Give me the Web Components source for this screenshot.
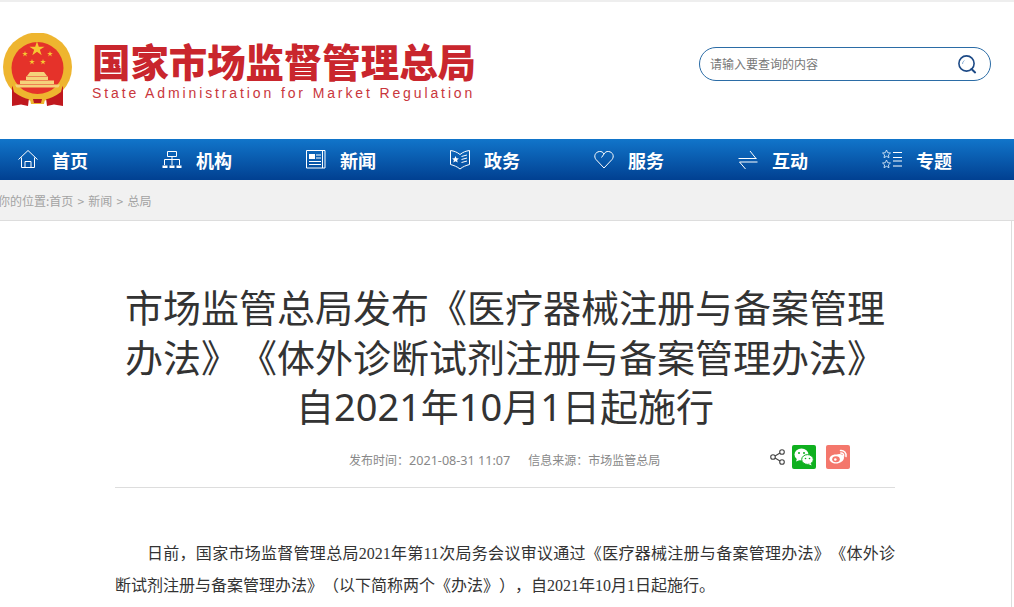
<!DOCTYPE html>
<html lang="zh-CN">
<head>
<meta charset="utf-8">
<title>国家市场监督管理总局</title>
<style>
  html, body { margin: 0; padding: 0; background: #fff; overflow: hidden; }
  body { font-family: "Noto Sans CJK SC", "Noto Sans", sans-serif; text-spacing-trim: space-all; }
</style>
</head>
<body>
<site-page>
  <site-header slot="header"></site-header>
  <nav-bar slot="nav">
    <nav-item label="首页" icon="home"></nav-item>
    <nav-item label="机构" icon="org"></nav-item>
    <nav-item label="新闻" icon="news"></nav-item>
    <nav-item label="政务" icon="gov"></nav-item>
    <nav-item label="服务" icon="heart"></nav-item>
    <nav-item label="互动" icon="swap"></nav-item>
    <nav-item label="专题" icon="topic"></nav-item>
  </nav-bar>
  <bread-crumb slot="crumb">你的位置:首页 &gt; 新闻 &gt; 总局</bread-crumb>
  <article-view slot="main">
    <span slot="title">市场监管总局发布《医疗器械注册与备案管理办法》《体外诊断试剂注册与备案管理办法》自2021年10月1日起施行</span>
    <article-meta slot="meta" date="2021-08-31 11:07" source="市场监管总局"></article-meta>
    日前，国家市场监督管理总局2021年第11次局务会议审议通过《医疗器械注册与备案管理办法》《体外诊断试剂注册与备案管理办法》（以下简称两个《办法》），自2021年10月1日起施行。
  </article-view>
</site-page>

<script>
class SitePage extends HTMLElement {
  constructor() {
    super()
    this.attachShadow({ mode: 'open' })
    this.shadowRoot.innerHTML = `
      <style>
        :host { display: block; border-top: 2px solid #eee; }
      </style>
      <slot name="header"></slot>
      <slot name="nav"></slot>
      <slot name="crumb"></slot>
      <slot name="main"></slot>
    `
  }
}

class SearchBox extends HTMLElement {
  constructor() {
    super()
    this.attachShadow({ mode: 'open' })
    this.shadowRoot.innerHTML = `
      <style>
        :host { display: flex; align-items: center; justify-content: space-between; box-sizing: border-box;
          width: 292px; height: 34px; margin-top: -14px; padding: 0 13px 0 10px; border: 1px solid #2b6ca6; border-radius: 17px;
          font-size: 12px; color: #777; background: #fff; }
        svg { display: block; }
      </style>
      <span>请输入要查询的内容</span>
      <svg width="20" height="20" viewBox="0 0 20 20" fill="none">
        <circle cx="9.5" cy="9.5" r="7.6" stroke="#1d4a86" stroke-width="1.6"/>
        <path d="M14.5 15l3.6 3.4" stroke="#1d4a86" stroke-width="2" stroke-linecap="round"/>
        <path d="M5.5 10a4 4 0 0 1 2-3.6" stroke="#8fb2d8" stroke-width="1"/>
      </svg>
    `
  }
}

const STAR = 'M0-3L.7-.9H2.900L1.100.3 1.800 2.400 0 1.100-1.800 2.400-1.100.3-2.900-.9H-.7Z'

class SiteHeader extends HTMLElement {
  constructor() {
    super()
    this.attachShadow({ mode: 'open' })
    this.shadowRoot.innerHTML = `
      <style>
        :host { display: flex; align-items: center; justify-content: space-between; box-sizing: border-box;
          height: 137px; padding: 0 23px 0 3px; }
        .brand { display: flex; align-items: center; gap: 19px; margin-top: -1px; }
        .logo { display: block; }
        .cn { font-size: 38.4px; line-height: 42px; font-weight: 900; color: #c9262d; white-space: nowrap; }
        .en { font-family: "Liberation Sans", sans-serif; font-size: 14px; line-height: 18px; letter-spacing: 2.88px; color: #c9363c; white-space: nowrap; margin-top: 3px; }
      </style>
      <div class="brand">
        <svg class="logo" width="70" height="74" viewBox="0 0 70 74">
          <circle cx="34.500" cy="34" r="34.500" fill="#eeb52f"/>
          <circle cx="34.500" cy="35" r="26" fill="#e5322a"/>
          <path d="${STAR}" transform="translate(34 16) scale(2.600)" fill="#f6c632"/>
          <path d="${STAR}" transform="translate(22 21)" fill="#f6c632"/>
          <path d="${STAR}" transform="translate(47 21)" fill="#f6c632"/>
          <path d="${STAR}" transform="translate(29 29)" fill="#f6c632"/>
          <path d="${STAR}" transform="translate(40 29)" fill="#f6c632"/>
          <path d="M27 39h14l3 4H24zM23 43.500h22V47H23zM17 47.500h34V51H17zM12 51.500h45l-1.500 3H13.500z" fill="#f5d27a"/>
          <path d="M9 53L17 60 26 65 25 73 18 71.500 9 73Z M60 53L52 60 43 65 44 73 51 71.500 60 73Z" fill="#c0181e"/>
          <path d="M9 51q10 10 25.500 11q15.500-1 25.500-11l-2 8q-8 6-16 7.500l-1 4.500h-13l-1-4.500q-8-1.500-16-7.500z" fill="#eeb52f"/>
          <path d="M30 66h9l-1 4h-7z" fill="#b5171d"/>
        </svg>
        <div>
          <div class="cn">国家市场监督管理总局</div>
          <div class="en">State Administration for Market Regulation</div>
        </div>
      </div>
      <search-box></search-box>
    `
  }
}

class NavBar extends HTMLElement {
  constructor() {
    super()
    this.attachShadow({ mode: 'open' })
    this.shadowRoot.innerHTML = `
      <style>
        :host { display: grid; grid-template-columns: repeat(7, 144px); box-sizing: border-box;
          height: 41px; padding-left: 17px; background: linear-gradient(#1175ca, #014091); }
      </style>
      <slot></slot>
    `
  }
}

const NAV_ICONS = {
  home: '<path d="M1.500 10.500L11 1.500 20.500 10.500M4.500 8.500V18.500H17.500V8.500M8 18.500V12.500H14V18.500"/>',
  org: '<path d="M6.500 2.500h9v5h-9zM11 7.500V10.500M3.500 10.500h15M3.500 10.500V16M11 10.500V16M18.500 10.500V16"/><path d="M1.500 16.500h5V19h-5zM8.500 16.500h5V19h-5zM15.500 16.500h5V19h-5z" fill="#fff" stroke="none"/>',
  news: '<path d="M1.500 1.500h18.500v17.500H1.500zM17.500 1.500V19"/><path d="M4 5h6v5H4z" fill="#fff" stroke="none"/><path d="M11 6h5M11 9h5M4 12.500h12M4 15.500h12"/>',
  gov: '<path d="M1.500 1.500C5 2 8 3 11 5.500C14 3 17 2 20.500 1.500V15.500C17 16.500 14 17.500 11 20C8 17.500 5 16.500 1.500 15.500Z"/><path d="M12.500 7.500L18 6M12.500 10.500L18 9M12.500 13.500L18 12"/><path d="M6.500 7l1 2.300 2.400.2-1.800 1.600.6 2.400-2.200-1.300-2.200 1.300.6-2.400-1.800-1.600 2.400-.2z" fill="#fff" stroke="none"/>',
  heart: '<path d="M11 19L3 10.500C.5 7.500 2 3 6.500 2.500 8.500 2.300 10 3.200 11 5 12 3.200 13.500 2.300 15.500 2.500 20 3 21.500 7.500 19 10.500Z"/><path d="M11 5L8.500 8.500"/>',
  swap: '<path d="M1.500 9.500h18M13 2l6 7.500M20.500 13H2.500M8.500 20L2.500 13"/>',
  topic: '<path d="M5.500 1l1.200 2.700 2.800.3-2.100 1.900.6 2.800-2.500-1.400-2.500 1.400.6-2.800L1.500 4l2.800-.3zM5.500 11l1.200 2.700 2.800.3-2.100 1.900.6 2.800-2.500-1.400-2.500 1.400.6-2.800L1.500 14l2.800-.3z" stroke="#d5e6f7" stroke-width=".9"/><path d="M12 3.500h9M12 8.500h9M12 12h9M12 17h9"/>'
}

class NavItem extends HTMLElement {
  constructor() {
    super()
    this.attachShadow({ mode: 'open' })
    const icon = NAV_ICONS[this.getAttribute('icon')]
    this.shadowRoot.innerHTML = `
      <style>
        :host { display: flex; align-items: center; gap: 13px; color: #fff; font-size: 18px; font-weight: 700; line-height: 41px; }
        svg { display: block; flex: none; fill: none; stroke: #fff; stroke-width: 1; }
        span { position: relative; top: 1px; }
      </style>
      <svg width="22" height="22" viewBox="0 0 22 22">${icon}</svg>
      <span>${this.getAttribute('label')}</span>
    `
  }
}

class BreadCrumb extends HTMLElement {
  constructor() {
    super()
    this.attachShadow({ mode: 'open' })
    this.shadowRoot.innerHTML = `
      <style>
        :host { display: block; box-sizing: border-box; height: 41px; border-bottom: 1px solid #ddd; background: #f1f1f1;
          padding: 0; font-size: 12px; line-height: 42px; color: #a3a3a3; white-space: nowrap; word-spacing: 1.5px; }
        div { margin-left: -2px; }
      </style>
      <div><slot></slot></div>
    `
  }
}

class ArticleMeta extends HTMLElement {
  constructor() {
    super()
    this.attachShadow({ mode: 'open' })
    this.shadowRoot.innerHTML = `
      <style>
        :host { display: flex; align-items: center; box-sizing: border-box; height: 59px; padding: 4px 45px 0 234px;
          border-bottom: 1px solid #ddd; font-size: 12px; color: #888; white-space: nowrap; }
        .src { margin-left: 18px; }
        .colon { font-family: "Noto Sans CJK TC", sans-serif; }
        .date { font-family: "Noto Sans", sans-serif; font-size: 12.6px; }
        .share { display: flex; align-items: center; margin-left: auto; margin-top: -6px; }
        svg { display: block; }
        .wx { margin: 0 10px 0 7px; }
      </style>
      <span>发布时间<span class="colon">：</span><span class="date">${this.getAttribute('date')}</span></span>
      <span class="src">信息来源<span class="colon">：</span>${this.getAttribute('source')}</span>
      <div class="share">
        <svg width="15" height="16" viewBox="0 0 15 16" fill="none" stroke="#444" stroke-width="1.100">
          <circle cx="3" cy="8" r="2.300"/><circle cx="12" cy="3" r="2.300"/><circle cx="12" cy="13" r="2.300"/>
          <path d="M5 6.900L10 4.100M5 9.100L10 11.900"/>
        </svg>
        <svg class="wx" width="24" height="24" viewBox="0 0 24 24">
          <rect width="24" height="24" rx="2" fill="#0fb01f"/>
          <ellipse cx="9.500" cy="9.500" rx="7" ry="6" fill="#fff"/>
          <path d="M5 13.500l-1 3 4-1.500z" fill="#fff"/>
          <ellipse cx="15.500" cy="14.500" rx="5.800" ry="4.900" fill="#fff" stroke="#0fb01f"/>
          <path d="M18.500 18l1.200 2.500-3.500-1.500z" fill="#fff"/>
          <circle cx="7" cy="8" r="1" fill="#0fb01f"/><circle cx="12" cy="8" r="1" fill="#0fb01f"/>
          <circle cx="13.500" cy="13.500" r=".8" fill="#0fb01f"/><circle cx="17.500" cy="13.500" r=".8" fill="#0fb01f"/>
        </svg>
        <svg width="24" height="24" viewBox="0 0 24 24">
          <rect width="24" height="24" rx="2" fill="#f4776c"/>
          <path d="M10.500 9.500C14 8 18 9.500 18 12.500c0 3.500-4 6-8 6-3.500 0-6.500-1.800-6.500-4.500 0-2.500 3-5 7-4.500z" fill="#fff"/>
          <ellipse cx="10" cy="14.300" rx="3.800" ry="3" fill="#f4776c"/>
          <circle cx="9.300" cy="14.500" r="1.300" fill="#fff"/>
          <path d="M14.500 5.500a5 5 0 0 1 5.500 6M14.800 8a2.500 2.500 0 0 1 2.800 3" fill="none" stroke="#fff" stroke-width="1.500" stroke-linecap="round"/>
        </svg>
      </div>
    `
  }
}

class ArticleView extends HTMLElement {
  constructor() {
    super()
    this.attachShadow({ mode: 'open' })
    this.shadowRoot.innerHTML = `
      <style>
        :host { display: block; box-sizing: border-box; width: 1012px; height: 386px; padding: 62px 116px 0 115px;
          border-right: 1px solid #ddd; color: #333; }
        h1 { margin: 0 auto -3px; font-family: "Noto Sans", "Noto Sans CJK SC", sans-serif; font-size: 38px; font-weight: 400; line-height: 49.5px; text-align: center; color: #333; }
        p { margin: 50px 0 0; font-family: "Liberation Serif", "Noto Sans CJK SC", serif; font-size: 16px; line-height: 32px; text-indent: 32px; text-align: justify; color: #333; }
      </style>
      <h1><slot name="title"></slot></h1>
      <slot name="meta"></slot>
      <p><slot></slot></p>
    `
  }
}

customElements.define('site-page', SitePage)
customElements.define('search-box', SearchBox)
customElements.define('site-header', SiteHeader)
customElements.define('nav-bar', NavBar)
customElements.define('nav-item', NavItem)
customElements.define('bread-crumb', BreadCrumb)
customElements.define('article-meta', ArticleMeta)
customElements.define('article-view', ArticleView)
</script>
</body>
</html>
